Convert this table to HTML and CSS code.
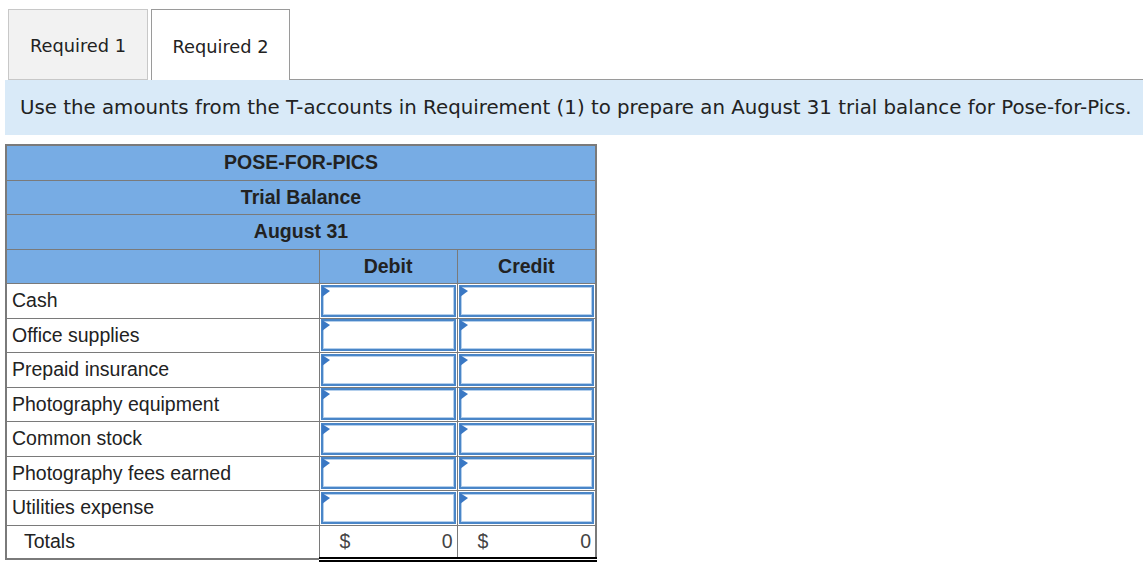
FILE: index.html
```html
<!DOCTYPE html>
<html>
<head>
<meta charset="utf-8">
<link rel="stylesheet" href="styles.css">
</head>
<body>
<div class="tabs">
  <div class="tab tab-off">Required 1</div>
  <div class="tab tab-on">Required 2</div>
  <div class="tab-fill"></div>
</div>
<div class="instr">Use the amounts from the T-accounts in Requirement (1) to prepare an August 31 trial balance for Pose-for-Pics.</div>
<table class="tb">
  <colgroup><col class="c-lbl"><col class="c-num"><col class="c-num2"></colgroup>
  <tr class="hd"><td colspan="3">POSE-FOR-PICS</td></tr>
  <tr class="hd"><td colspan="3">Trial Balance</td></tr>
  <tr class="hd"><td colspan="3">August 31</td></tr>
  <tr class="hd"><td></td><td>Debit</td><td>Credit</td></tr>
  <tr class="row"><td class="lbl">Cash</td><td class="in"><div class="box"></div></td><td class="in"><div class="box"></div></td></tr>
  <tr class="row"><td class="lbl">Office supplies</td><td class="in"><div class="box"></div></td><td class="in"><div class="box"></div></td></tr>
  <tr class="row"><td class="lbl">Prepaid insurance</td><td class="in"><div class="box"></div></td><td class="in"><div class="box"></div></td></tr>
  <tr class="row"><td class="lbl">Photography equipment</td><td class="in"><div class="box"></div></td><td class="in"><div class="box"></div></td></tr>
  <tr class="row"><td class="lbl">Common stock</td><td class="in"><div class="box"></div></td><td class="in"><div class="box"></div></td></tr>
  <tr class="row"><td class="lbl">Photography fees earned</td><td class="in"><div class="box"></div></td><td class="in"><div class="box"></div></td></tr>
  <tr class="row"><td class="lbl">Utilities expense</td><td class="in"><div class="box"></div></td><td class="in"><div class="box"></div></td></tr>
  <tr class="row tot"><td class="lbl totlbl">Totals</td><td class="totc"><span>$</span><span>0</span></td><td class="totc"><span>$</span><span>0</span></td></tr>
</table>
</body>
</html>
```
FILE: styles.css
```css
html, body { margin: 0; padding: 0; background: #fff; }
body { font-family: "DejaVu Sans", Verdana, sans-serif; color: #222; }

.tabs { display: flex; padding: 9px 0 0 8px; height: 80px; box-sizing: border-box; }
.tab { box-sizing: border-box; height: 71px; display: flex; align-items: center; justify-content: center; font-size: 17.8px; padding-top: 2px; }
.tab-off { width: 140px; background: #f2f2f2; border: 1px solid #c8c8c8; color: #222; }
.tab-on { width: 139px; margin-left: 3px; background: #fff; border: 1px solid #9a9a9a; border-bottom: none; }
.tab-fill { flex: 1; border-bottom: 1px solid #9a9a9a; }

.instr { margin-left: 5px; height: 55px; background: #d9eaf8; padding-left: 15px; display: flex; align-items: center; font-size: 19.8px; color: #222; white-space: nowrap; overflow: hidden; }

.tb { margin: 9px 0 0 5px; border-collapse: collapse; width: 592px; font-family: "Liberation Sans", Arial, sans-serif; table-layout: fixed; border: 2px solid #7a7a7a; }
.c-lbl { width: 313px; }
.c-num { width: 138px; }
.c-num2 { width: 139px; }
.tb td { padding: 0; border: 1px solid #7a7a7a; }
.hd td { background: #77ace4; height: 33.5px; text-align: center; font-weight: bold; font-size: 19.5px; color: #222; }
.row td { height: 33.5px; font-size: 19.5px; }
.row td.lbl { padding-left: 5px; color: #222; white-space: nowrap; }
.row td.totlbl { padding-left: 17px; }
.box { height: 32px; margin: 0 1px; border: 2px solid #4a86c8; box-shadow: inset 0 0 0 1px #b4cfec; box-sizing: border-box; position: relative; background: #fff; }
.box::before { content: ""; position: absolute; left: -1px; top: -1px; border-left: 8px solid #3a78c4; border-top: 5px solid transparent; border-bottom: 6px solid transparent; }
.tot td { height: 31px; }
.tot td.totc { border-bottom: 5px double #000; color: #444; }
.totc span:first-child { float: left; padding-left: 20px; }
.totc span:last-child { float: right; padding-right: 4px; }
```
